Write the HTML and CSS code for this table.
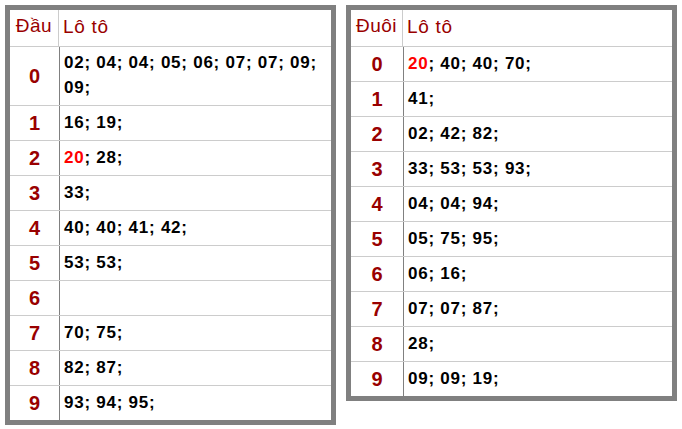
FILE: index.html
```html
<!DOCTYPE html>
<html lang="vi">
<head>
<meta charset="utf-8">
<title>Lô tô</title>
<link rel="stylesheet" href="styles.css">
</head>
<body>
<div class="page">
  <div class="board board-dau">
    <div class="row head"><div class="k">Đầu</div><div class="v">Lô tô</div></div>
    <div class="row"><div class="k">0</div><div class="v">02; 04; 04; 05; 06; 07; 07; 09; 09;</div></div>
    <div class="row"><div class="k">1</div><div class="v">16; 19;</div></div>
    <div class="row"><div class="k">2</div><div class="v"><span class="hot">20</span>; 28;</div></div>
    <div class="row"><div class="k">3</div><div class="v">33;</div></div>
    <div class="row"><div class="k">4</div><div class="v">40; 40; 41; 42;</div></div>
    <div class="row"><div class="k">5</div><div class="v">53; 53;</div></div>
    <div class="row"><div class="k">6</div><div class="v"></div></div>
    <div class="row"><div class="k">7</div><div class="v">70; 75;</div></div>
    <div class="row"><div class="k">8</div><div class="v">82; 87;</div></div>
    <div class="row"><div class="k">9</div><div class="v">93; 94; 95;</div></div>
  </div>
  <div class="board board-duoi">
    <div class="row head"><div class="k">Đuôi</div><div class="v">Lô tô</div></div>
    <div class="row"><div class="k">0</div><div class="v"><span class="hot">20</span>; 40; 40; 70;</div></div>
    <div class="row"><div class="k">1</div><div class="v">41;</div></div>
    <div class="row"><div class="k">2</div><div class="v">02; 42; 82;</div></div>
    <div class="row"><div class="k">3</div><div class="v">33; 53; 53; 93;</div></div>
    <div class="row"><div class="k">4</div><div class="v">04; 04; 94;</div></div>
    <div class="row"><div class="k">5</div><div class="v">05; 75; 95;</div></div>
    <div class="row"><div class="k">6</div><div class="v">06; 16;</div></div>
    <div class="row"><div class="k">7</div><div class="v">07; 07; 87;</div></div>
    <div class="row"><div class="k">8</div><div class="v">28;</div></div>
    <div class="row"><div class="k">9</div><div class="v">09; 09; 19;</div></div>
  </div>
</div>
</body>
</html>
```
FILE: styles.css
```css
html, body {
  margin: 0;
  padding: 0;
  background: #ffffff;
}

body {
  font-family: "Liberation Sans", Arial, sans-serif;
}

.page {
  display: flex;
  align-items: flex-start;
  gap: 10px;
  padding: 5px;
}

.board {
  width: 331px;
  box-sizing: border-box;
  border: 5px solid #808080;
  background: #ffffff;
}

.row {
  display: flex;
  min-height: 34px;
  border-bottom: 1px solid #cccccc;
}

.row:last-child {
  border-bottom: 0;
}

.k {
  flex: none;
  width: 49px;
  border-right: 1px solid #808080;
  display: flex;
  align-items: center;
  justify-content: center;
  font-size: 20px;
  font-weight: bold;
  color: #990000;
}

.board-duoi .k {
  width: 52px;
}

.v {
  flex: 1;
  min-width: 0;
  display: flex;
  align-items: center;
  padding: 3px 4px 5px;
  font-size: 17px;
  line-height: 25px;
  font-weight: bold;
  letter-spacing: 0.75px;
  color: #000000;
}

.head {
  min-height: 36px;
}

.head .k,
.head .v {
  font-size: 19px;
  font-weight: normal;
  color: #990000;
  letter-spacing: 0.7px;
  padding-bottom: 4px;
  box-sizing: border-box;
}

.head .k {
  border-right-color: #cccccc;
  letter-spacing: 0.5px;
}

.head .v {
  padding-top: 0;
}

.hot {
  color: #ff0000;
}
```
